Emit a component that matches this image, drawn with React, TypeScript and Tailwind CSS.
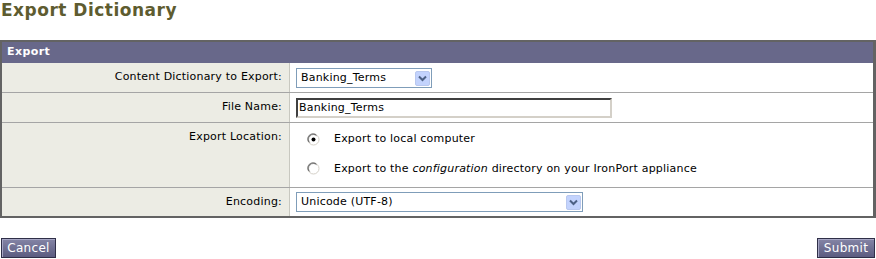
import React from "react";

const font = { fontFamily: '"DejaVu Sans", Verdana, sans-serif' };

function Chevron() {
  return (
    <div className="flex h-[15px] w-[15px] items-center justify-center rounded-[2px] border border-[#b9c8ef] bg-[#c3d3fd]">
      <svg width="9" height="7" viewBox="0 0 9 7">
        <path d="M1 1.5 L4.5 5 L8 1.5" fill="none" stroke="#4d6185" strokeWidth="2" />
      </svg>
    </div>
  );
}

function Select({ value, width }: { value: string; width: string }) {
  return (
    <div className={`flex h-[20px] items-center justify-between border border-[#7f9db9] bg-white pl-[4px] pr-[1px] ${width}`}>
      <span className="text-[11px] tracking-[0.2px] text-black">{value}</span>
      <Chevron />
    </div>
  );
}

function Radio({ checked }: { checked: boolean }) {
  return (
    <svg width="13" height="13" viewBox="0 0 13 13">
      <circle cx="6.5" cy="6.5" r="5.5" fill="#fff" stroke="#d4d0c8" strokeWidth="1" />
      <path d="M2 9 A5 5 0 0 1 9 2" fill="none" stroke="#808080" strokeWidth="1.2" />
      <path d="M3 10 A4 4 0 0 1 10 3" fill="none" stroke="#404040" strokeWidth="0.8" opacity="0.5" />
      {checked && <circle cx="6.5" cy="6.5" r="2" fill="#000" />}
    </svg>
  );
}

function Row({ label, children, h, top = false }: { label: string; children: React.ReactNode; h: string; top?: boolean }) {
  return (
    <div className={`flex ${h} ${top ? "" : "border-t border-[#a5a5a5]"}`}>
      <div className="flex w-[288px] shrink-0 justify-end border-r border-[#c8c8c0] bg-[#ecece4] pr-[7px] pt-[6px] text-[11px] tracking-[0.2px] text-black">
        {label}
      </div>
      <div className="flex-1 bg-white pl-[6px]">{children}</div>
    </div>
  );
}

function Btn({ label, w }: { label: string; w: string }) {
  return (
    <div className={`flex h-[20px] ${w} items-center justify-center border border-[#2f2f48] bg-gradient-to-b from-[#8585a6] to-[#5c5c80] text-[12px] tracking-[0.3px] text-white shadow-[inset_1px_1px_0_#a6a6c4]`}>
      {label}
    </div>
  );
}

export default function App() {
  return (
    <div className="h-[259px] w-[876px] overflow-hidden bg-white" style={font}>
      <h1 className="pl-[1px] pt-[0px] text-[17px] font-bold leading-[20px] tracking-[0.5px] text-[#5e5c30]">Export Dictionary</h1>
      <div className="mt-[20px] border-2 border-r-[3px] border-[#636363]">
        <div className="flex h-[21px] items-center bg-[#68688a] pl-[5px] text-[11px] font-bold tracking-[0.4px] text-white">Export</div>
        <Row label="Content Dictionary to Export:" h="h-[29px]" top>
          <div className="pt-[5px]">
            <Select value="Banking_Terms" width="w-[136px]" />
          </div>
        </Row>
        <Row label="File Name:" h="h-[30px]">
          <div className="pt-[5px]">
            <div className="flex h-[20px] w-[316px] items-center border-2 border-t-[#404040] border-l-[#404040] border-b-[#d4d0c8] border-r-[#d4d0c8] bg-white pl-[1px] text-[11px] tracking-[0.2px] text-black">
              Banking_Terms
            </div>
          </div>
        </Row>
        <Row label="Export Location:" h="h-[65px]">
          <div className="flex flex-col gap-[13px] pl-[11px] pt-[8px] text-[11px] tracking-[0.2px] text-black">
            <div className="flex items-center gap-[14px]">
              <Radio checked />
              <span>Export to local computer</span>
            </div>
            <div className="flex items-center gap-[14px]">
              <Radio checked={false} />
              <span>
                Export to the <i>configuration</i> directory on your IronPort appliance
              </span>
            </div>
          </div>
        </Row>
        <Row label="Encoding:" h="h-[29px]">
          <div className="pt-[4px]">
            <Select value="Unicode (UTF-8)" width="w-[287px]" />
          </div>
        </Row>
      </div>
      <div className="mt-[20px] flex justify-between pl-[1px] pr-[1px]">
        <Btn label="Cancel" w="w-[55px]" />
        <Btn label="Submit" w="w-[58px]" />
      </div>
    </div>
  );
}
